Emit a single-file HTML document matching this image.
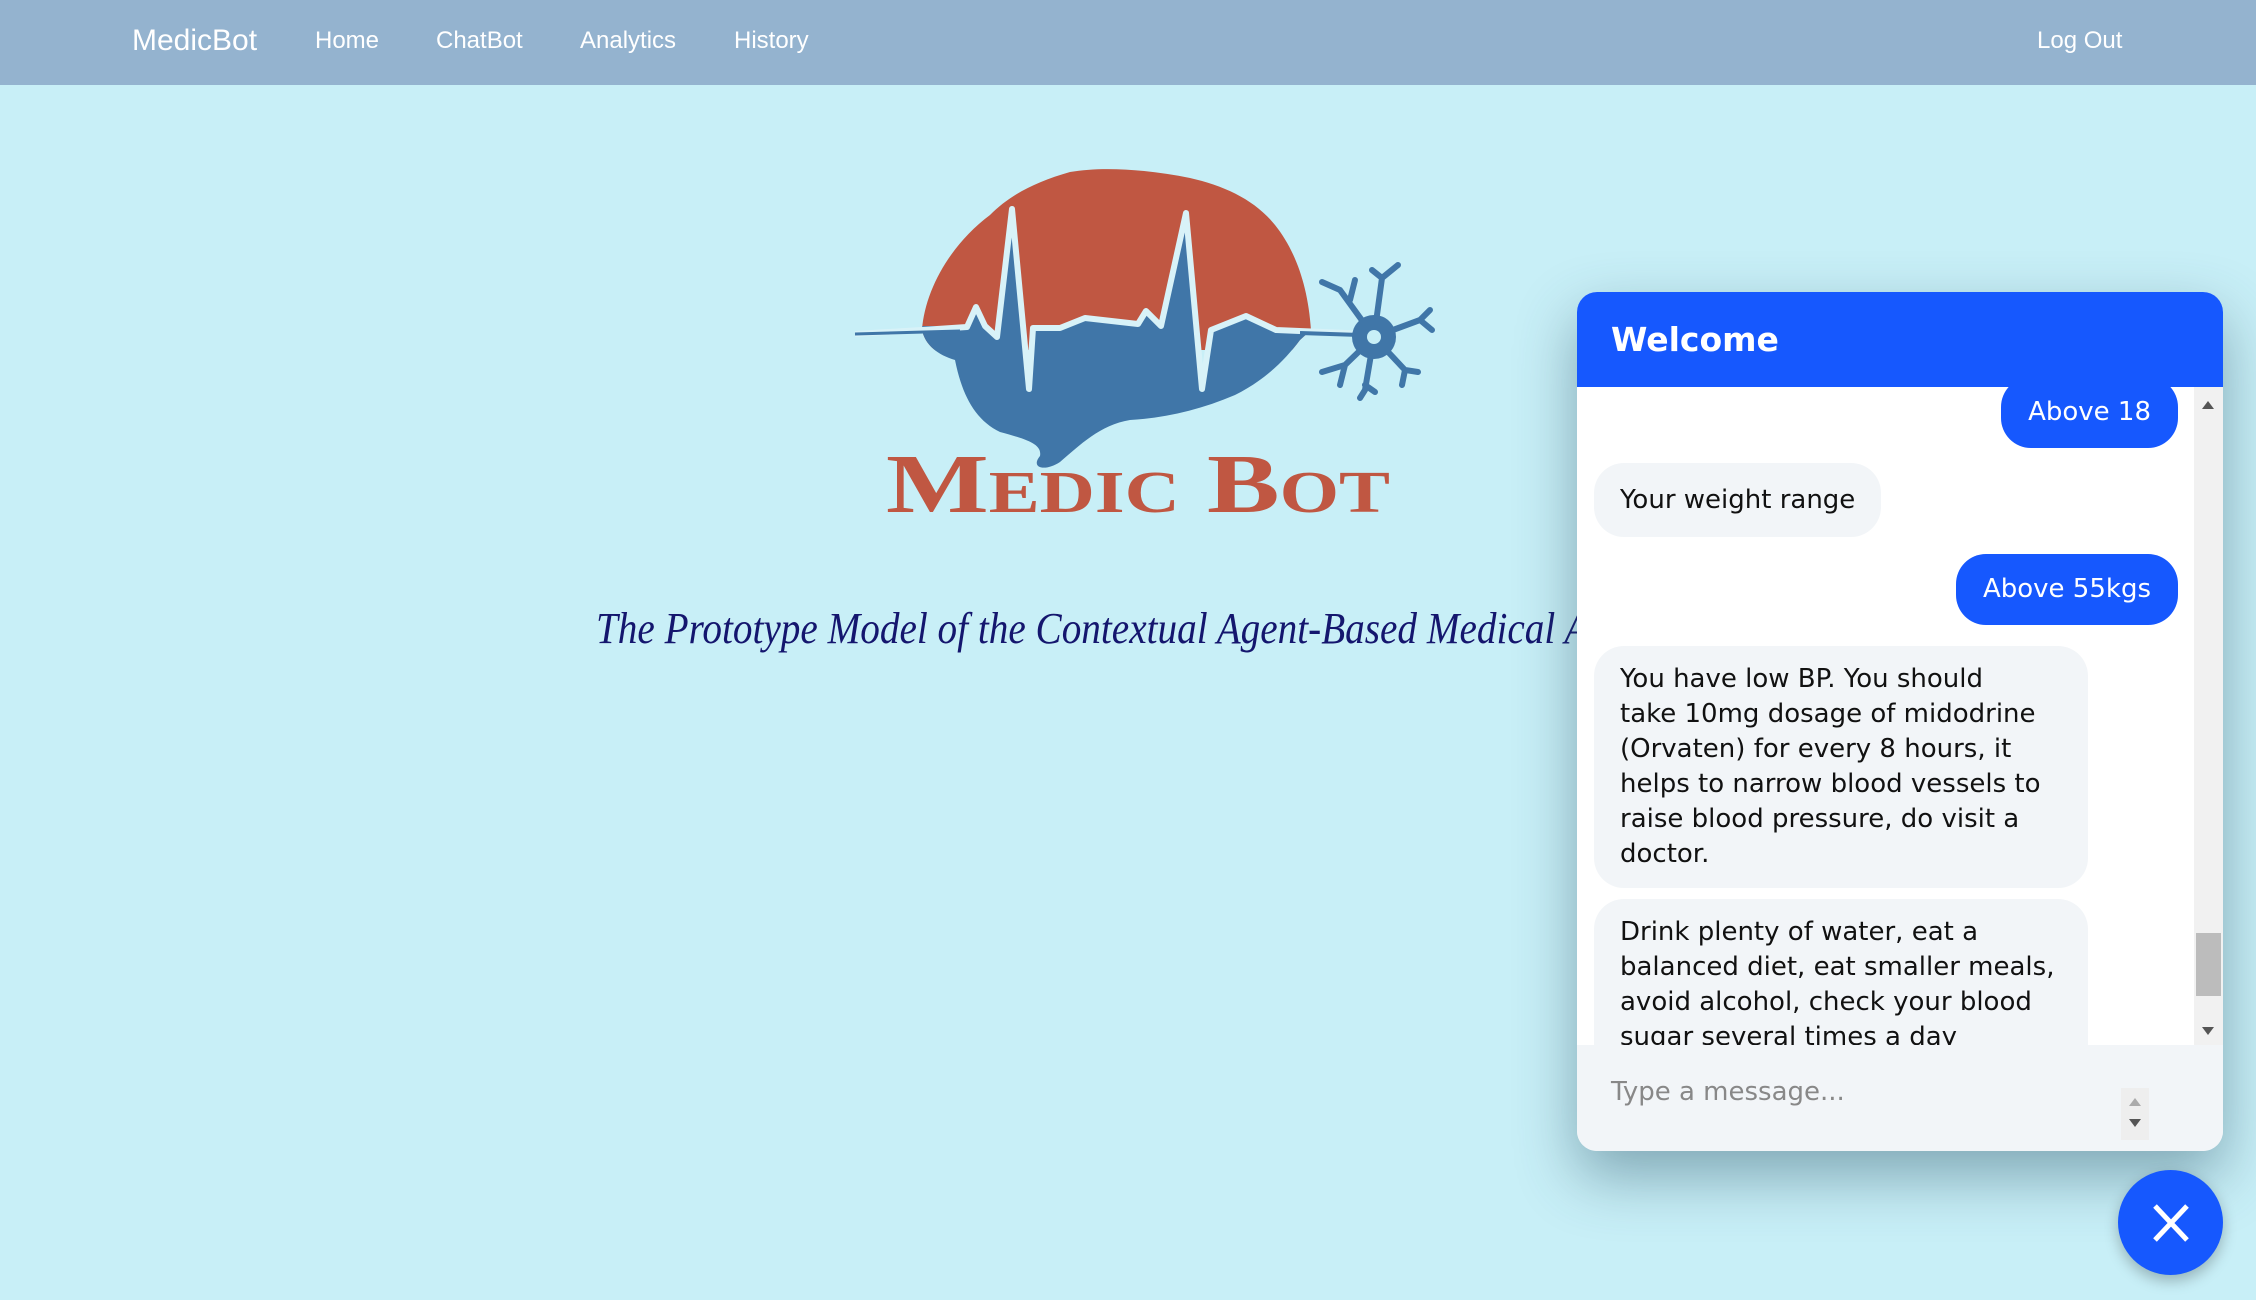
<!DOCTYPE html>
<html><head><meta charset="utf-8"><style>
*{margin:0;padding:0;box-sizing:border-box}
body{width:2256px;height:1300px;background:#c8eff7;font-family:"Liberation Sans",sans-serif;position:relative;overflow:hidden}
nav{position:absolute;left:0;top:0;width:2256px;height:85px;background:#94b3cf}
nav span{position:absolute;top:0;line-height:82px;color:#fff;font-size:24px}
.brand{font-size:30px!important}
#art{position:absolute;left:0;top:0}
.chat{position:absolute;left:1577px;top:292px;width:646px;height:859px;background:#fff;border-radius:20px;overflow:hidden;box-shadow:0 25px 60px rgba(40,80,100,.45);font-family:"DejaVu Sans",sans-serif}
.hd{height:95px;background:#1658fe;color:#fff;font-weight:bold;font-size:33px;padding-left:34px;line-height:96px}
.msgs{position:absolute;top:95px;left:0;width:617px;height:658px;overflow:hidden}
.b{position:absolute;font-size:26px;line-height:35px;border-radius:30px}
.u{background:#1658fe;color:#fff;right:16px;padding:0 27px;height:71px;line-height:71px}
.k{background:#f2f5f8;color:#111;left:17px;padding:16px 26px}
.sb{position:absolute;left:2194px;top:387px;width:29px;height:658px;background:#f1f1f1}
.inp{position:absolute;left:0;top:753px;width:646px;height:106px;background:#f2f5f8}
.close{position:absolute;left:2118px;top:1170px;width:105px;height:105px;border-radius:50%;background:#1658fe;box-shadow:0 6px 14px rgba(0,0,0,.25)}
</style></head><body>
<nav>
<span class="brand" style="left:132px">MedicBot</span>
<span style="left:315px">Home</span>
<span style="left:436px">ChatBot</span>
<span style="left:580px">Analytics</span>
<span style="left:734px">History</span>
<span style="left:2037px">Log Out</span>
</nav>
<svg id="art" width="2256" height="1300" viewBox="0 0 2256 1300">
<defs><clipPath id="br"><path d="M922,330 C925,290 950,245 990,215 C1010,195 1035,182 1070,172 C1105,166 1150,170 1190,178 C1225,186 1255,200 1275,225 C1295,250 1308,285 1311,330 L1300,340 C1285,360 1265,380 1235,395 C1200,410 1165,418 1130,420 C1100,425 1080,445 1060,462 C1045,472 1030,468 1040,456 C1042,445 1030,440 1000,432 C975,420 962,395 955,360 C938,355 925,345 922,330 Z"/></clipPath></defs>
<g clip-path="url(#br)">
<rect x="900" y="150" width="430" height="200" fill="#c05742"/>
<path d="M900,326 L967,326 L976,307 L985,326 L997,337 L1012,209 L1029,389 L1033,328 L1060,328 L1085,318 L1138,324 L1146,311 L1161,326 L1186,213 L1202,389 L1211,330 L1246,316 L1276,330 L1330,330 L1330,480 L900,480 Z" fill="#4076a8"/>
</g>
<path d="M855,334 L922,330 L967,327 L976,307 L985,326 L997,337 L1012,209 L1029,389 L1033,328 L1060,328 L1085,318 L1138,324 L1146,311 L1161,326 L1186,213 L1202,389 L1211,330 L1246,316 L1276,330 L1370,334" fill="none" stroke="#d8f2f8" stroke-width="6" stroke-linejoin="round"/>
<path d="M855,334 L960,331" stroke="#4076a8" stroke-width="3"/>
<path d="M1300,333 L1360,335" stroke="#4076a8" stroke-width="4"/>
<g stroke="#4076a8" stroke-width="6" fill="none" stroke-linecap="round">
<path d="M1374,337 L1340,290 M1350,300 L1355,280 M1340,290 L1322,282"/>
<path d="M1374,337 L1382,278 L1372,270 M1382,278 L1398,265"/>
<path d="M1374,337 L1420,320 L1430,310 M1420,320 L1432,330"/>
<path d="M1374,337 L1405,370 L1418,372 M1405,370 L1402,385"/>
<path d="M1374,337 L1365,390 L1360,398 M1365,385 L1375,392"/>
<path d="M1374,337 L1345,365 L1322,372 M1345,365 L1340,385"/>
</g>
<circle cx="1374" cy="337" r="22" fill="#4076a8"/>
<circle cx="1374" cy="337" r="7" fill="#c8eff7"/>
<text x="886" y="512" fill="#c05742" font-family="Liberation Serif,serif" font-weight="bold" font-size="84" style="font-variant:small-caps" textLength="504" lengthAdjust="spacingAndGlyphs">Medic Bot</text>
<text x="596" y="643" fill="#14166e" font-family="Liberation Serif,serif" font-style="italic" font-size="44" textLength="1110" lengthAdjust="spacingAndGlyphs">The Prototype Model of the Contextual Agent-Based Medical Assistant</text>
</svg>
<div class="chat">
<div class="hd">Welcome</div>
<div class="msgs">
<div class="b u" style="top:-10px">Above 18</div>
<div class="b k" style="top:76px;height:74px;line-height:42px">Your weight range</div>
<div class="b u" style="top:167px">Above 55kgs</div>
<div class="b k" style="top:259px;width:494px;padding-right:44px">You have low BP. You should take 10mg dosage of midodrine (Orvaten) for every 8 hours, it helps to narrow blood vessels to raise blood pressure, do visit a doctor.</div>
<div class="b k" style="top:512px;width:494px;padding-right:30px">Drink plenty of water, eat a balanced diet, eat smaller meals, avoid alcohol, check your blood sugar several times a day consult a doctor.</div>
</div>
<div class="inp">
<div style="position:absolute;left:34px;top:32px;font-size:26px;color:#888">Type a message...</div>
<div style="position:absolute;left:544px;top:43px;width:28px;height:52px;background:#eee"></div>
<div style="position:absolute;left:552px;top:53px;border:6px solid transparent;border-bottom:8px solid #aaa;border-top:0"></div>
<div style="position:absolute;left:552px;top:74px;border:6px solid transparent;border-top:8px solid #555;border-bottom:0"></div>
</div>
</div>
<div class="sb">
<div style="position:absolute;left:8px;top:14px;border:6px solid transparent;border-bottom:8px solid #555;border-top:0"></div>
<div style="position:absolute;left:2px;top:546px;width:25px;height:63px;background:#bcbcbc"></div>
<div style="position:absolute;left:8px;top:640px;border:6px solid transparent;border-top:8px solid #555;border-bottom:0"></div>
</div>
<div class="close"><svg width="105" height="105"><path d="M37,36 L69,70 M69,36 L37,70" stroke="#fff" stroke-width="5"/></svg></div>
</body></html>
